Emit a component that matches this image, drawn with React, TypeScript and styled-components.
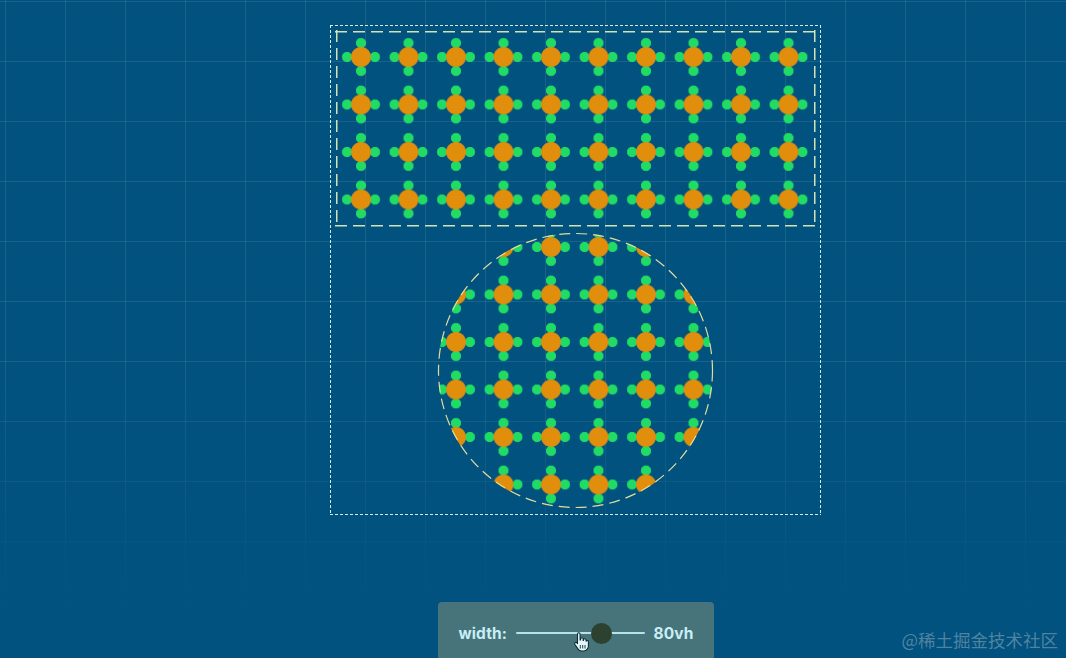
import React from "react";
import styled, { createGlobalStyle } from "styled-components";

const BG = "#01527f";
const ORANGE = "#e08e0b";
const GREEN = "#20dc64";
const TILE = 47.5;
const H = TILE / 2;

const GlobalStyle = createGlobalStyle`
  html, body { margin: 0; padding: 0; }
  body { background: ${BG}; overflow: hidden; }
  * { box-sizing: border-box; }
`;

const Page = styled.div`
  position: relative;
  width: 100vw;
  height: 100vh;
  overflow: hidden;
  padding: 25px 0 0 330px;
  background-color: ${BG};
  background-image:
    linear-gradient(to bottom, rgba(1, 82, 127, 0) 0px, rgba(1, 82, 127, 0) 360px, ${BG} 610px),
    linear-gradient(90deg, rgba(255, 255, 255, 0.09) 1px, transparent 1px),
    linear-gradient(180deg, rgba(255, 255, 255, 0.09) 1px, transparent 1px);
  background-size: 100% 100%, 60px 60px, 60px 60px;
  background-position: 0 0, 5px 0, 0 1px;
  font-family: Inter, "Noto Sans", sans-serif;
`;

const Column = styled.div`
  width: 491px;
  display: flex;
  flex-direction: column;
  align-items: center;
`;

const dash = (dir: string, color: string, on: number, off: number) =>
  `repeating-linear-gradient(${dir}, ${color} 0 ${on}px, transparent ${on}px ${on + off}px)`;

const Frame = styled.div`
  position: relative;
  width: 491px;
  height: 490px;
  padding: 5px 5px 8px 5px;
  display: flex;
  flex-direction: column;
  align-items: center;
  gap: 6px;
  background-image:
    ${dash("90deg", "rgba(240,250,240,0.9)", 3, 2)},
    ${dash("90deg", "rgba(240,250,240,0.9)", 3, 2)},
    ${dash("180deg", "rgba(240,250,240,0.9)", 3, 2)},
    ${dash("180deg", "rgba(240,250,240,0.9)", 3, 2)};
  background-size: 100% 1px, 100% 1px, 1px 100%, 1px 100%;
  background-position: 0 0, 0 100%, 0 0, 100% 0;
  background-repeat: no-repeat;
`;

const pattern = `
  background-image:
    radial-gradient(circle at ${H}px ${H}px, ${ORANGE} 9.6px, transparent 10.3px),
    radial-gradient(circle at ${H}px ${H - 14}px, ${GREEN} 4.7px, transparent 5.4px),
    radial-gradient(circle at ${H}px ${H + 14}px, ${GREEN} 4.7px, transparent 5.4px),
    radial-gradient(circle at ${H - 14}px ${H}px, ${GREEN} 4.7px, transparent 5.4px),
    radial-gradient(circle at ${H + 14}px ${H}px, ${GREEN} 4.7px, transparent 5.4px);
  background-size: ${TILE}px ${TILE}px;
  background-attachment: fixed;
  background-position: ${361 - H}px ${57 - H}px;
`;

const RectArea = styled.div`
  position: relative;
  width: 481px;
  height: 197px;
  flex: none;
  ${pattern}
  &::after {
    content: "";
    position: absolute;
    inset: 0;
    pointer-events: none;
    background-image:
      ${dash("90deg", "#d2e4b4", 12, 6)},
      ${dash("90deg", "#d2e4b4", 12, 6)},
      ${dash("180deg", "#d2e4b4", 12, 6)},
      ${dash("180deg", "#d2e4b4", 12, 6)};
    background-size: 100% 1.5px, 100% 1.5px, 1.5px 100%, 1.5px 100%;
    background-position: 0 1px, 0 calc(100% - 1px), 1px 0, calc(100% - 1px) 0;
    background-repeat: no-repeat;
  }
`;

const CircleArea = styled.div`
  position: relative;
  width: 275px;
  height: 275px;
  flex: none;
  border-radius: 50%;
  ${pattern}
`;

const Ring = styled.svg`
  position: absolute;
  inset: 0;
  overflow: visible;
`;

const Panel = styled.div`
  position: relative;
  margin-top: 87px;
  width: 276px;
  height: 64px;
  border-radius: 4px;
  background: #47747a;
  display: flex;
  align-items: center;
  padding: 0 20px 2px 21px;
  gap: 9px;
  color: #c8eef6;
  font-size: 15.5px;
  font-weight: 700;
  letter-spacing: 0.1px;
`;

const Label = styled.span`
  line-height: 1;
  padding-top: 1px;
`;

const Track = styled.div`
  position: relative;
  flex: 1;
  height: 2px;
  background: #b6e2ee;
  border-radius: 1px;
`;

const Thumb = styled.div`
  position: absolute;
  top: 50%;
  width: 21px;
  height: 21px;
  margin: -10.5px 0 0 -10.5px;
  border-radius: 50%;
  background: #2c4130;
`;

const Cursor = styled.svg`
  position: absolute;
  left: 134px;
  top: 30px;
`;

const Watermark = styled.div`
  position: absolute;
  right: 8px;
  bottom: 6px;
  font-family: "Noto Sans CJK SC", sans-serif;
  font-size: 17.5px;
  color: rgba(150, 175, 190, 0.55);
`;

export default function App() {
  const value = 0.665;
  return (
    <>
      <GlobalStyle />
      <Page>
        <Column>
          <Frame>
            <RectArea />
            <CircleArea>
              <Ring width="275" height="275" viewBox="0 0 275 275">
                <circle
                  cx="137.5"
                  cy="137.5"
                  r="137"
                  fill="none"
                  stroke="#e4dc9c"
                  strokeWidth="1.2"
                  strokeDasharray="11 6"
                />
              </Ring>
            </CircleArea>
          </Frame>
          <Panel>
            <Label>width:</Label>
            <Track>
              <Thumb style={{ left: `${value * 100}%` }} />
            </Track>
            <Label>80vh</Label>
            <Cursor width="17" height="21" viewBox="0 0 17 21">
              <path
                d="M5.5 2a1.3 1.3 0 0 1 2.6 0v6h.5V7a1.3 1.3 0 0 1 2.6 0v1.5h.3V8a1.3 1.3 0 0 1 2.6 0v1.2a1.2 1.2 0 0 1 2.3.5V14c0 2.6-2 5-4.6 5H9.4c-1.5 0-2.5-.7-3.3-1.9L2.8 12.3a1.3 1.3 0 0 1 2-1.6l.7.9Z"
                fill="#e6f7fb"
                stroke="#0d2b30"
                strokeWidth="1.1"
                strokeLinejoin="round"
              />
              <path d="M8.3 13v3.5M10.7 13v3.5M13 13v3.5" stroke="#0d2b30" strokeWidth="0.9" />
            </Cursor>
          </Panel>
        </Column>
        <Watermark>@稀土掘金技术社区</Watermark>
      </Page>
    </>
  );
}
